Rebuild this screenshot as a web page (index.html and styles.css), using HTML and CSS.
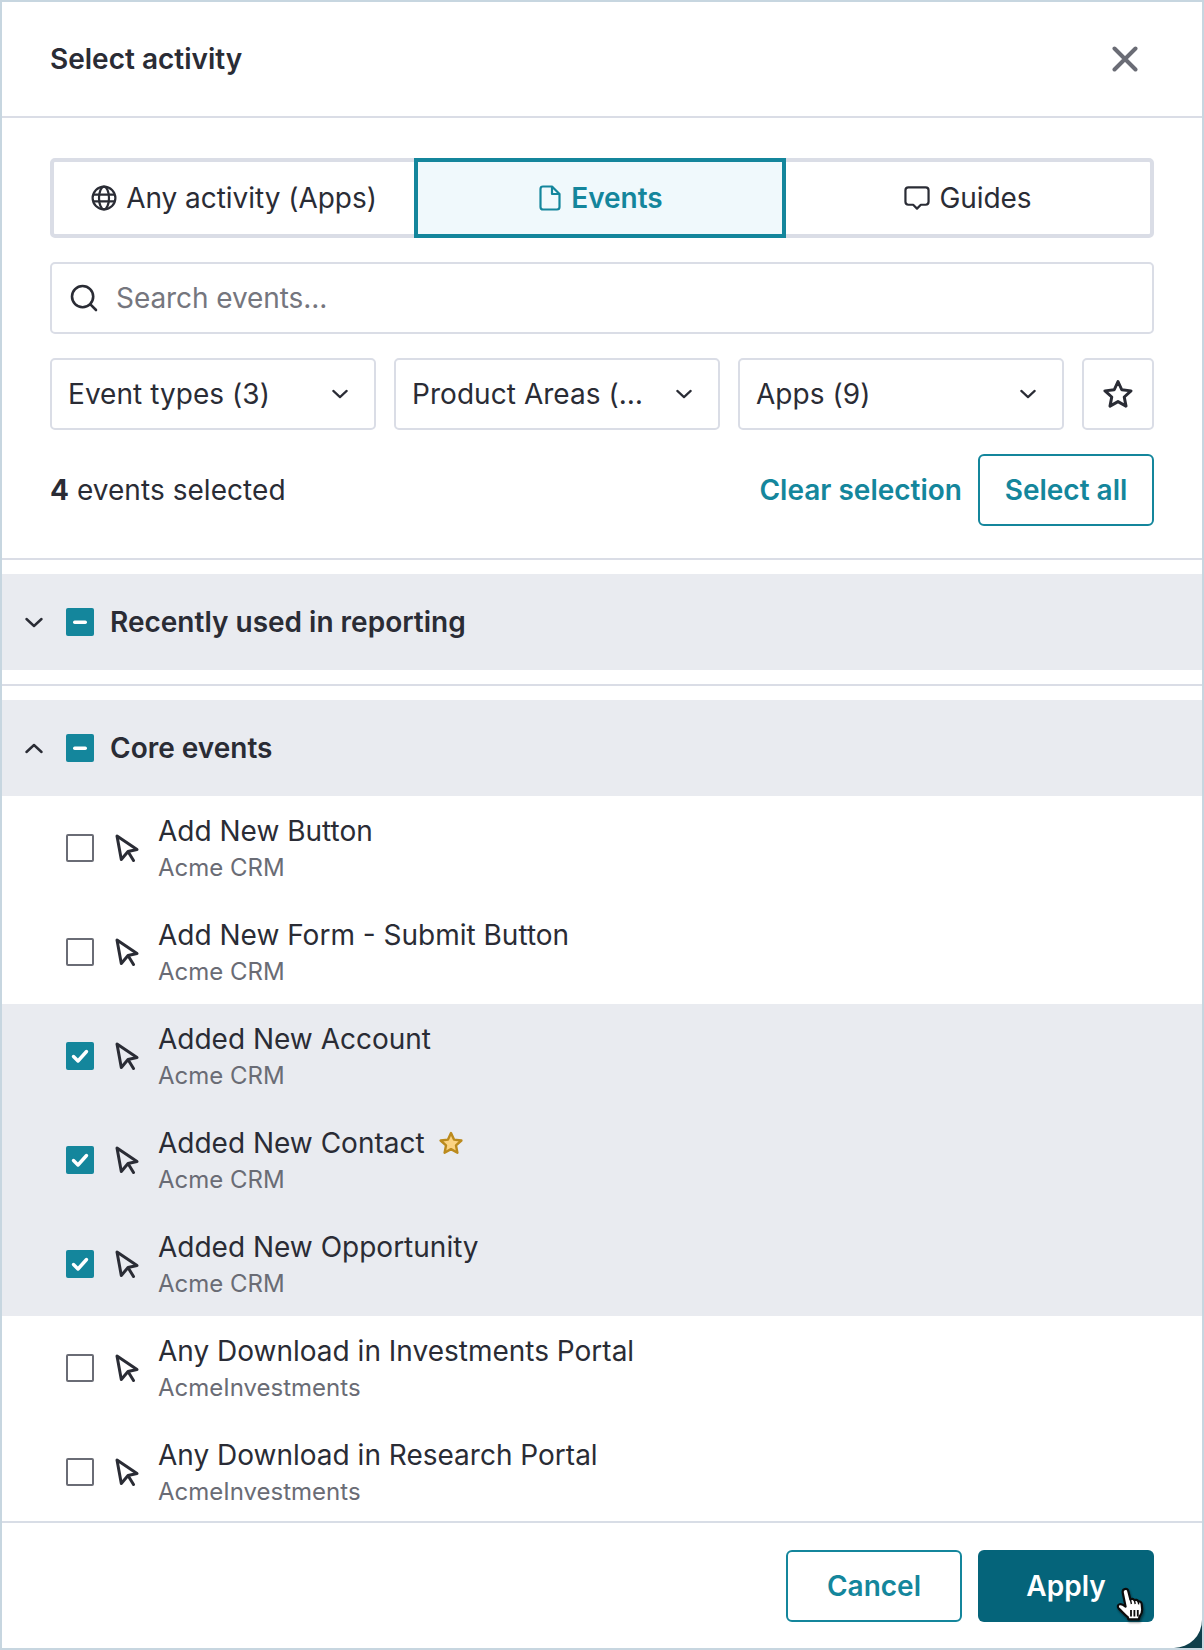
FILE: index.html
```html
<!DOCTYPE html>
<html lang="en">
<head>
<meta charset="utf-8">
<title>Select activity</title>
<link rel="stylesheet" href="styles.css">
</head>
<body>
<svg class="defs" width="0" height="0" aria-hidden="true">
  <symbol id="i-arrow" viewBox="0 0 24 28"><path d="M2 2 L6.3 25.5 L13 17.5 L22 15.5 Z M13 17.5 L18.5 26.5" fill="none" stroke="currentColor" stroke-width="3" stroke-linejoin="round" stroke-linecap="round"/></symbol>
  <symbol id="i-chev" viewBox="0 0 18 10"><path d="M1.5 1.5 L9 8.5 L16.5 1.5" fill="none" stroke="currentColor" stroke-width="2.4" stroke-linecap="round" stroke-linejoin="round"/></symbol>
  <symbol id="i-check" viewBox="0 0 28 28"><rect width="28" height="28" rx="2" fill="#14869c"/><path d="M7.5 14.5 L12 19 L20.5 9.5" fill="none" stroke="#fff" stroke-width="3.4" stroke-linecap="round" stroke-linejoin="round"/></symbol>
  <symbol id="i-minus" viewBox="0 0 28 28"><rect width="28" height="28" rx="2" fill="#14869c"/><rect x="7" y="12.5" width="14" height="3.5" rx="1.7" fill="#fff"/></symbol>
  <symbol id="i-star" viewBox="0 0 24 24"><path d="M12 2 L15 8.6 L22.4 9.5 L17 14.4 L18.4 21.7 L12 18.1 L5.6 21.7 L7 14.4 L1.6 9.5 L9 8.6 Z" stroke-width="2.4" stroke-linejoin="round"/></symbol>
</svg>
<div class="frame">
  <main class="dialog">
    <header class="head">
      <h1 class="title">Select activity</h1>
      <button class="close" aria-label="Close">
        <svg class="close-icon" viewBox="0 0 26 26"><path d="M2.5 2.5 L23.5 23.5 M23.5 2.5 L2.5 23.5" fill="none" stroke="currentColor" stroke-width="4" stroke-linecap="round"/></svg>
      </button>
    </header>
    <section class="controls">
      <div class="tabs">
        <div class="tab tab-apps">
          <svg class="tab-icon" viewBox="0 0 26 26"><g fill="none" stroke="currentColor" stroke-width="2.2"><circle cx="13" cy="13" r="11.4"/><ellipse cx="13" cy="13" rx="5" ry="11.4"/><path d="M2 9.6 H24 M2 16.4 H24"/></g></svg>
          <span>Any activity (Apps)</span>
        </div>
        <div class="tab tab-active">
          <svg class="tab-icon" viewBox="0 0 22 26"><g fill="none" stroke="currentColor" stroke-width="2.2" stroke-linejoin="round"><path d="M4 1.5 H13 L20.5 9 V22 Q20.5 24.5 18 24.5 H4 Q1.5 24.5 1.5 22 V4 Q1.5 1.5 4 1.5 Z"/><path d="M13 1.5 V9 H20.5"/></g></svg>
          <span>Events</span>
        </div>
        <div class="tab tab-guides">
          <svg class="tab-icon" viewBox="0 0 27 26"><path d="M4.5 2 H22.5 Q25.5 2 25.5 5 V17 Q25.5 20 22.5 20 H17.5 L13.5 24 L9.5 20 H4.5 Q1.5 20 1.5 17 V5 Q1.5 2 4.5 2 Z" fill="none" stroke="currentColor" stroke-width="2.3" stroke-linejoin="round"/></svg>
          <span>Guides</span>
        </div>
      </div>
      <div class="search">
        <svg class="search-icon" viewBox="0 0 28 28"><g fill="none" stroke="currentColor" stroke-width="2.6" stroke-linecap="round"><circle cx="12.6" cy="12.6" r="10.6"/><path d="M20.4 20.4 L26 26"/></g></svg>
        <span class="placeholder">Search events...</span>
      </div>
      <div class="filters">
        <div class="select"><span>Event types (3)</span><svg class="chev-sm"><use href="#i-chev"/></svg></div>
        <div class="select"><span>Product Areas (…</span><svg class="chev-sm"><use href="#i-chev"/></svg></div>
        <div class="select"><span>Apps (9)</span><svg class="chev-sm"><use href="#i-chev"/></svg></div>
        <div class="fav"><svg class="fav-star"><use href="#i-star"/></svg></div>
      </div>
      <div class="selection">
        <div class="count"><b>4</b> events selected</div>
        <div class="sel-actions">
          <span class="link">Clear selection</span>
          <span class="btn btn-outline btn-small">Select all</span>
        </div>
      </div>
    </section>
    <section class="list">
      <div class="group group-first">
        <svg class="chev"><use href="#i-chev"/></svg>
        <svg class="box"><use href="#i-minus"/></svg>
        <span class="group-name">Recently used in reporting</span>
      </div>
      <div class="group-gap"></div>
      <div class="group">
        <svg class="chev chev-up"><use href="#i-chev"/></svg>
        <svg class="box"><use href="#i-minus"/></svg>
        <span class="group-name">Core events</span>
      </div>
      <div class="rows">
        <div class="row"><span class="empty-box"></span><svg class="arrow"><use href="#i-arrow"/></svg><div class="row-text"><div class="row-name">Add New Button</div><div class="row-app">Acme CRM</div></div></div>
        <div class="row"><span class="empty-box"></span><svg class="arrow"><use href="#i-arrow"/></svg><div class="row-text"><div class="row-name">Add New Form - Submit Button</div><div class="row-app">Acme CRM</div></div></div>
        <div class="row row-on"><svg class="box"><use href="#i-check"/></svg><svg class="arrow"><use href="#i-arrow"/></svg><div class="row-text"><div class="row-name">Added New Account</div><div class="row-app">Acme CRM</div></div></div>
        <div class="row row-on"><svg class="box"><use href="#i-check"/></svg><svg class="arrow"><use href="#i-arrow"/></svg><div class="row-text"><div class="row-name">Added New Contact<svg class="gold-star"><use href="#i-star"/></svg></div><div class="row-app">Acme CRM</div></div></div>
        <div class="row row-on"><svg class="box"><use href="#i-check"/></svg><svg class="arrow"><use href="#i-arrow"/></svg><div class="row-text"><div class="row-name">Added New Opportunity</div><div class="row-app">Acme CRM</div></div></div>
        <div class="row"><span class="empty-box"></span><svg class="arrow"><use href="#i-arrow"/></svg><div class="row-text"><div class="row-name">Any Download in Investments Portal</div><div class="row-app">AcmeInvestments</div></div></div>
        <div class="row"><span class="empty-box"></span><svg class="arrow"><use href="#i-arrow"/></svg><div class="row-text"><div class="row-name">Any Download in Research Portal</div><div class="row-app">AcmeInvestments</div></div></div>
      </div>
    </section>
    <footer class="foot">
      <span class="btn btn-outline btn-wide">Cancel</span>
      <span class="btn btn-solid btn-wide">Apply</span>
    </footer>
    <svg class="hand" viewBox="0 0 30 36">
      <path d="M9.2 3.2 C11 2.2 12.8 3.2 13.3 5.2 L15.4 13.4 C16.6 12.4 18.6 12.6 19.4 14.2 C20.6 13.4 22.6 13.8 23.2 15.4 C24.6 15 26.4 15.8 26.6 17.6 L27.2 23.4 C27.4 26.8 26 29 24.4 31 L23.8 33.4 L13.4 33.4 L12.8 31.2 C10.2 29.4 7.4 26 3.8 22.6 C2.2 21 2.6 18.8 4.6 18.2 C6.4 17.6 8.4 18.8 10.6 20.6 L7.8 7 C7.4 5.4 7.8 3.9 9.2 3.2 Z" fill="#fff" stroke="#0c0c0c" stroke-width="2.2" stroke-linejoin="round"/>
      <path d="M15.4 13.4 L16.4 18 M19.4 14.2 L20.2 18 M23.2 15.4 L23.7 18.4" stroke="#0c0c0c" stroke-width="1.4" fill="none"/>
      <path d="M16 24 V30.5 M19.4 24 V30.5 M22.8 24 V30.5" stroke="#0c0c0c" stroke-width="1.8" fill="none"/>
    </svg>
  </main>
</div>
</body>
</html>
```
FILE: styles.css
```css
* { box-sizing: border-box; }
html, body { margin: 0; padding: 0; }
body { font-family: Inter, "Noto Sans", sans-serif; color: #2a2c35; background: #fff; }
.defs { position: absolute; }
svg { display: block; flex: none; }

.frame { width: 1204px; height: 1650px; border: 2px solid #c7d6e0; background: #0e3f4b; }
.dialog { position: relative; width: 100%; height: 100%; background: #fff; border-bottom-right-radius: 28px; display: flex; flex-direction: column; overflow: hidden; }

.head { height: 116px; flex: none; display: flex; align-items: center; justify-content: space-between; padding: 0 48px; border-bottom: 2px solid #dadde6; }
.title { margin: 0; font-size: 28px; font-weight: 600; line-height: 36px; }
.close { border: 0; background: none; padding: 0; color: #6a6c75; display: flex; margin-right: 16px; }
.close-icon { width: 26px; height: 26px; }

.controls { flex: none; padding: 40px 48px 0; border-bottom: 2px solid #dadde6; height: 442px; }
.tabs { display: flex; height: 80px; border: 4px solid #dadde6; border-radius: 5px; }
.tab { display: flex; align-items: center; justify-content: center; gap: 9px; font-size: 28px; letter-spacing: -.04px; }
.tab-apps { width: 360px; }
.tab-active { width: 372px; margin: -4px 0; border: 4px solid #14869c; background: #f0f9fc; color: #14869c; font-weight: 600; gap: 8px; }
.tab-guides { flex: 1; }
.tab-icon { height: 26px; width: 26px; }

.search { margin-top: 24px; height: 72px; border: 2px solid #dadde6; border-radius: 5px; display: flex; align-items: center; padding: 0 16px 0 18px; gap: 18px; }
.search-icon { width: 28px; height: 28px; }
.placeholder { font-size: 28px; color: #75767e; letter-spacing: -.08px; }

.filters { margin-top: 24px; display: flex; gap: 18px; }
.select { width: 326px; height: 72px; border: 2px solid #dadde6; border-radius: 5px; display: flex; align-items: center; justify-content: space-between; padding: 0 26px 0 16px; font-size: 28px; letter-spacing: .05px; }
.chev-sm { width: 16px; height: 10px; color: #2a2c35; }
.fav { width: 72px; height: 72px; border: 2px solid #dadde6; border-radius: 5px; display: flex; align-items: center; justify-content: center; }
.fav-star { width: 30px; height: 30px; fill: none; stroke: #2a2c35; }

.selection { margin-top: 24px; display: flex; align-items: center; justify-content: space-between; }
.count { font-size: 28px; letter-spacing: .05px; }
.count b { font-weight: 700; }
.sel-actions { display: flex; align-items: center; gap: 16px; }
.link { font-size: 28px; font-weight: 600; color: #14869c; }
.btn { display: flex; align-items: center; justify-content: center; height: 72px; border-radius: 6px; font-size: 28px; font-weight: 600; }
.btn-outline { border: 2px solid #14869c; color: #14869c; background: #fff; }
.btn-small { width: 176px; }
.btn-wide { width: 176px; }
.btn-solid { background: #05647a; color: #fff; }

.list { flex: 1; min-height: 0; overflow: hidden; padding-top: 14px; }
.group { height: 96px; background: #e9ebf0; display: flex; align-items: center; padding-left: 23px; }
.group-gap { height: 30px; position: relative; }
.group-gap::after { content: ""; display: block; height: 2px; background: #dadde6; transform: translateY(14px); }
.chev { width: 18px; height: 11px; color: #2a2c35; }
.chev-up { transform: rotate(180deg); }
.box { width: 28px; height: 28px; }
.group .box { margin-left: 23px; }
.group-name { margin-left: 16px; font-size: 28px; font-weight: 600; }

.row { height: 104px; display: flex; align-items: center; padding-left: 64px; }
.row-on { background: #e9ebf0; }
.empty-box { flex: none; width: 28px; height: 28px; border: 2px solid #6a6c75; border-radius: 2px; background: #fff; }
.arrow { width: 24px; height: 28px; margin-left: 21px; color: #2a2c35; }
.row-text { margin-left: 19px; padding-top: 3px; }
.row-name { display: flex; align-items: center; gap: 14px; font-size: 28px; line-height: 36px; }
.row-app { margin-top: 1px; font-size: 24px; line-height: 36px; color: #6a6c75; }
.gold-star { width: 24px; height: 24px; fill: #fbd382; stroke: #bb8a1d; }

.foot { flex: none; height: 127px; border-top: 2px solid #d8dde6; display: flex; justify-content: flex-end; gap: 16px; padding: 27px 48px 0; }
.hand { position: absolute; left: 1113px; top: 1584px; width: 30px; height: 36px; filter: drop-shadow(1px 2px 1px rgba(0,0,0,.45)); }
```
